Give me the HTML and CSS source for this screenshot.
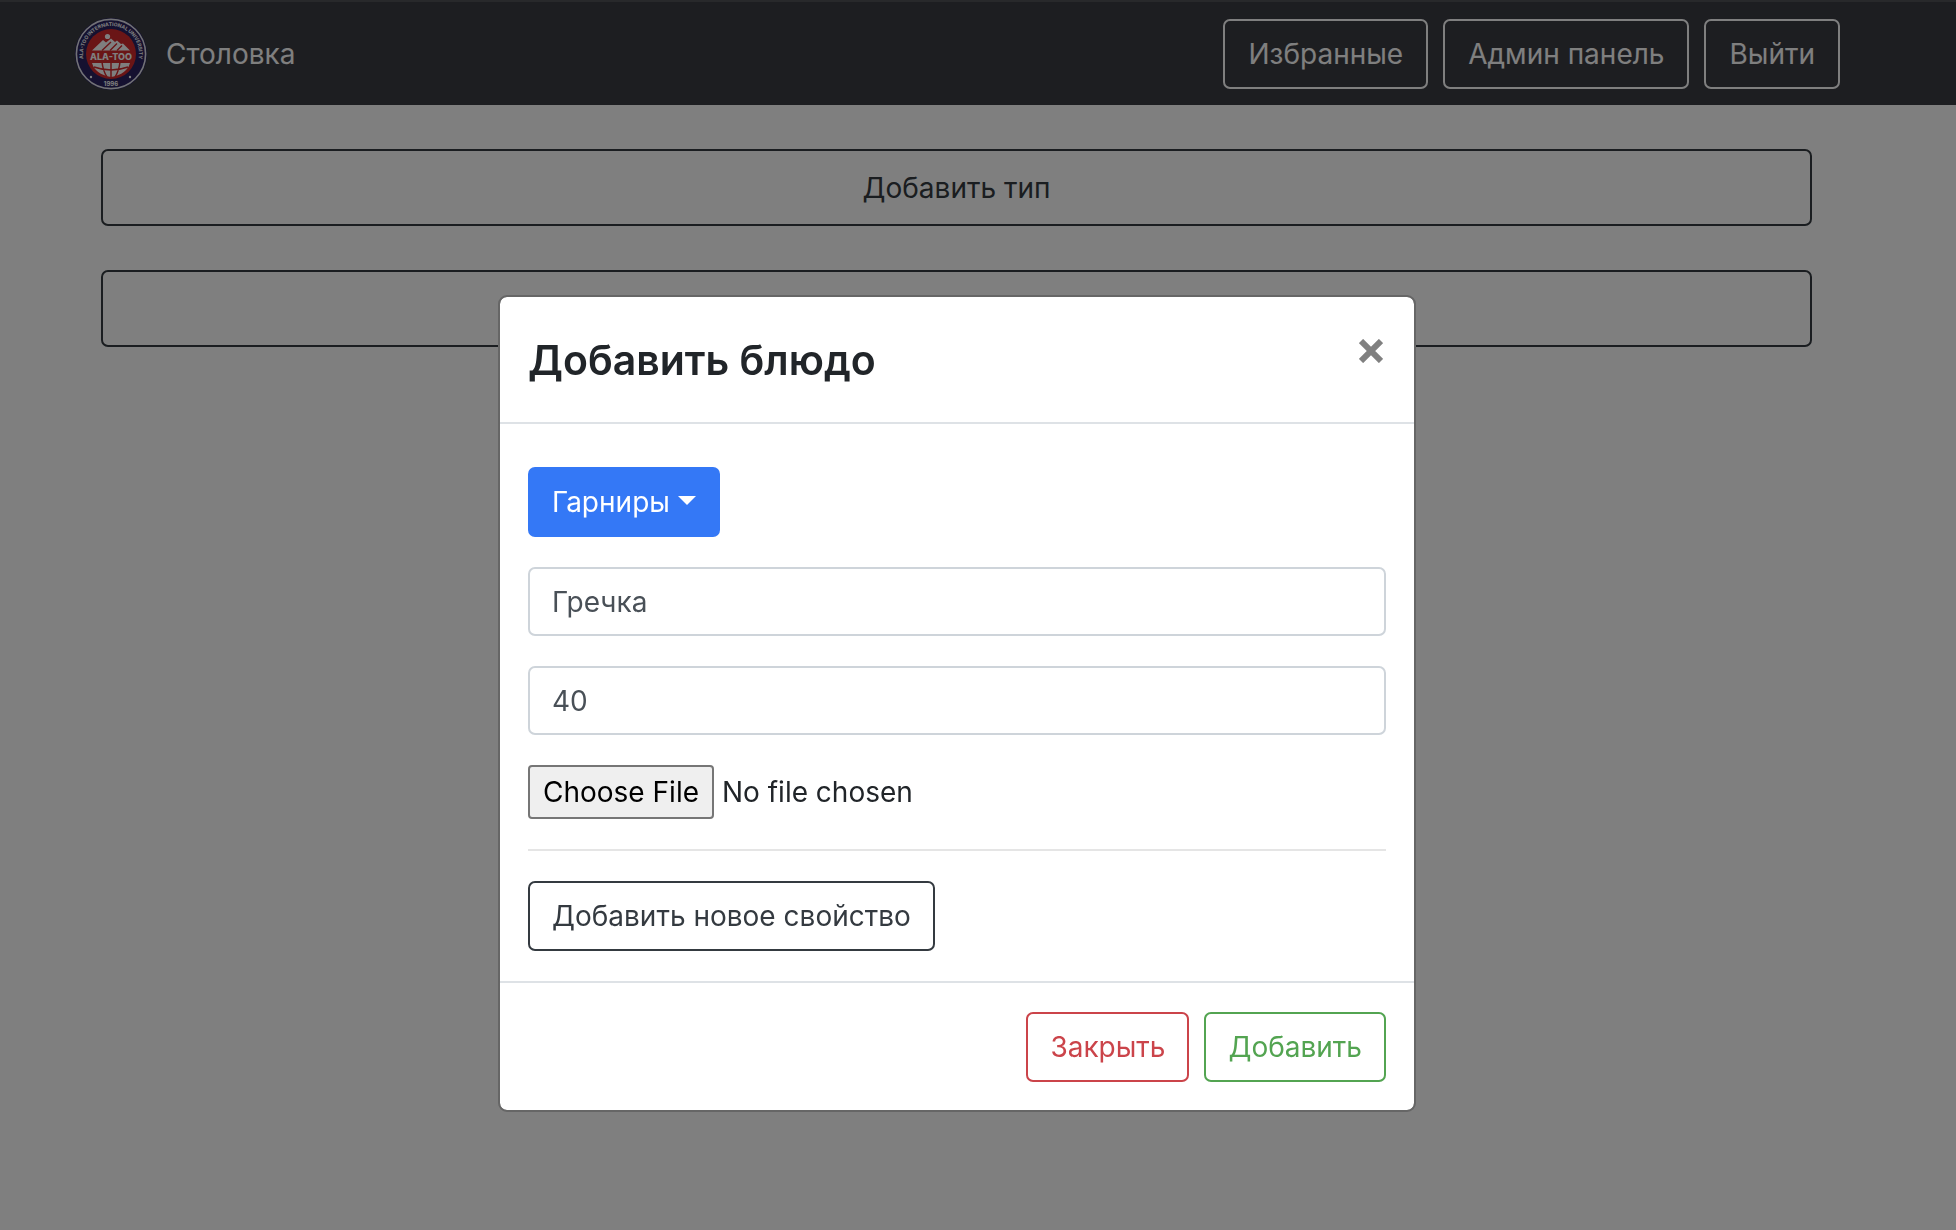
FILE: index.html
```html
<!DOCTYPE html>
<html lang="ru">
<head>
<meta charset="utf-8">
<meta name="viewport" content="width=device-width, initial-scale=1">
<title>Столовка</title>
<link rel="stylesheet" href="styles.css">
</head>
<body>
<header class="navbar">
  <a class="brand" href="#">
    <svg class="brand-logo" viewBox="0 0 72 72" aria-hidden="true">
      <defs>
        <path id="arc" d="M13.6 52.8A28 28 0 1 1 58.4 52.8"/>
      </defs>
      <circle cx="36" cy="36" r="36" fill="#2a2360"/>
      <circle cx="36" cy="36" r="34.6" fill="none" stroke="#e4e4ec" stroke-width="1.6"/>
      <circle cx="36" cy="36" r="25" fill="#d42a2c"/>
      <circle cx="32.500" cy="18.500" r="2.600" fill="#fff"/>
      <path d="M17 32.500L28 22L31 24.500L36 20.500L40 24L42 22.500L46 26L48 25.500L55 32.500Z" fill="#fff"/>
      <path d="M27 32.500L36 24M35 32.500L42 25.500M42 32.500L47 27.500" stroke="#d42a2c" stroke-width="1.400" fill="none"/>
      <text class="logo-name" x="36" y="42" text-anchor="middle">ALA-TOO</text>
      <path d="M17 45H55Q52 56 36 59Q20 56 17 45Z" fill="#fff"/>
      <path d="M36 44V60M27 44Q28 53 32 59M45 44Q44 53 40 59M19 49Q36 55 53 49" stroke="#d42a2c" stroke-width="1.500" fill="none"/>
      <text class="logo-ring"><textPath href="#arc" startOffset="50%" text-anchor="middle">ALA-TOO INTERNATIONAL UNIVERSITY</textPath></text>
      <circle cx="16" cy="59" r="1.200" fill="#fff"/>
      <circle cx="55" cy="59" r="1.200" fill="#fff"/>
      <text class="logo-year" x="36" y="68" text-anchor="middle">1996</text>
    </svg>
    <span>Столовка</span>
  </a>
  <nav class="nav-actions">
    <button class="btn btn-light" type="button">Избранные</button>
    <button class="btn btn-light" type="button">Админ панель</button>
    <button class="btn btn-light" type="button">Выйти</button>
  </nav>
</header>

<main class="content">
  <button class="btn btn-dark btn-wide" type="button">Добавить тип</button>
  <button class="btn btn-dark btn-wide" type="button">Добавить блюдо</button>
</main>

<div class="backdrop">
  <section class="modal" role="dialog" aria-modal="true" aria-labelledby="modal-title">
    <header class="modal-header">
      <h1 class="modal-title" id="modal-title">Добавить блюдо</h1>
      <button class="close" type="button" aria-label="Close">
        <svg viewBox="0 0 24 24" aria-hidden="true"><path d="M2 2L22 22M22 2L2 22" stroke="currentColor" stroke-width="6"/></svg>
      </button>
    </header>
    <form class="modal-body">
      <div class="dropdown">
        <select class="dropdown-select" aria-label="Тип">
          <option>Гарниры</option>
        </select>
        <span class="caret"></span>
      </div>
      <input class="field" type="text" value="Гречка" aria-label="Название блюда">
      <input class="field" type="text" value="40" aria-label="Цена">
      <input class="file" type="file" aria-label="Фото блюда">
      <hr class="divider">
      <button class="btn btn-dark btn-property" type="button">Добавить новое свойство</button>
    </form>
    <footer class="modal-footer">
      <button class="btn btn-danger" type="button">Закрыть</button>
      <button class="btn btn-success" type="button">Добавить</button>
    </footer>
  </section>
</div>
</body>
</html>
```
FILE: styles.css
```css
*,
*::before,
*::after {
  box-sizing: border-box;
}

:root {
  --gutter: 30px;
  --scrollbar: 42px;
  --radius: 7px;
}

body {
  margin: 0;
  min-height: 100vh;
  background: #fff;
  color: #212529;
  font: 28px/44px Inter, "Noto Sans", sans-serif;
}

button,
input,
select {
  margin: 0;
  font: inherit;
}

.navbar {
  display: flex;
  align-items: center;
  justify-content: space-between;
  padding: 16px calc(74px + var(--scrollbar)) 15px 75px;
  border-top: 2px solid #505256;
  background: #3a3c43;
}

.brand {
  display: flex;
  align-items: center;
  gap: 19px;
  color: #fff;
  text-decoration: none;
}

.brand-logo {
  width: 72px;
  height: 72px;
}

.logo-name {
  font: 800 9px Inter, sans-serif;
  fill: #fff;
}

.logo-ring {
  font: 700 5px Inter, sans-serif;
  fill: #fff;
}

.logo-year {
  font: 700 6px Inter, sans-serif;
  fill: #fff;
}

.nav-actions {
  display: flex;
  gap: 15px;
}

.btn {
  padding: 11px 22px;
  border: 2px solid currentColor;
  border-radius: var(--radius);
  background: transparent;
}

.btn-light {
  padding: 11px 23px;
  color: #fff;
}

.btn-dark {
  color: #343a40;
}

.btn-danger {
  color: #cb444a;
}

.btn-success {
  color: #53a451;
}

.content {
  display: flex;
  flex-direction: column;
  gap: 44px;
  padding: 44px calc(102px + var(--scrollbar)) 44px 101px;
}

.btn-wide {
  padding: 15px 22px 14px;
}

.backdrop {
  position: fixed;
  inset: 0;
  display: flex;
  align-items: flex-start;
  justify-content: center;
  padding: 24vh var(--scrollbar) 0 0;
  background: rgba(0, 0, 0, 0.5);
}

.modal {
  width: 100%;
  max-width: 918px;
  border: 2px solid #666;
  border-radius: 9px;
  background: #fff;
  background-clip: padding-box;
}

.modal-header {
  display: flex;
  align-items: flex-start;
  justify-content: space-between;
  padding: 30px 28px 29px;
  border-bottom: 2px solid #dee2e6;
}

.modal-title {
  margin: 0;
  font-size: 41px;
  font-weight: 600;
  line-height: 66px;
}

.close {
  display: flex;
  padding: 12px 3px;
  border: 0;
  background: none;
  color: #808080;
}

.close svg {
  width: 24px;
  height: 24px;
}

.modal-body {
  display: flex;
  flex-direction: column;
  gap: var(--gutter);
  padding: 43px 28px 30px;
}

.dropdown {
  display: grid;
  align-items: center;
  align-self: flex-start;
}

.dropdown-select,
.caret {
  grid-area: 1 / 1;
}

.dropdown-select {
  height: 70px;
  padding: 0 50px 0 24px;
  border: 0;
  border-radius: var(--radius);
  background: #3478f6;
  color: #fff;
  appearance: none;
}

.caret {
  justify-self: end;
  margin: 0 24px 4px 0;
  border: 9px solid transparent;
  border-top-color: #fff;
  border-bottom: 0;
  pointer-events: none;
}

.field {
  width: 100%;
  height: 69px;
  padding: 0 22px;
  border: 2px solid #ced4da;
  border-radius: var(--radius);
  background: #fff;
  color: #495057;
}

.file {
  width: 100%;
  height: 54px;
}

.file::file-selector-button {
  height: 54px;
  margin-right: 8px;
  padding: 0 13px;
  border: 2px solid #767676;
  border-radius: 4px;
  background: #efefef;
  color: #000;
  font: inherit;
}

.divider {
  width: 100%;
  margin: 0;
  border: 0;
  border-top: 2px solid #e5e5e5;
}

.btn-property {
  align-self: flex-start;
}

.modal-footer {
  display: flex;
  justify-content: flex-end;
  gap: 15px;
  padding: 29px 28px 28px;
  border-top: 2px solid #dee2e6;
}
```
